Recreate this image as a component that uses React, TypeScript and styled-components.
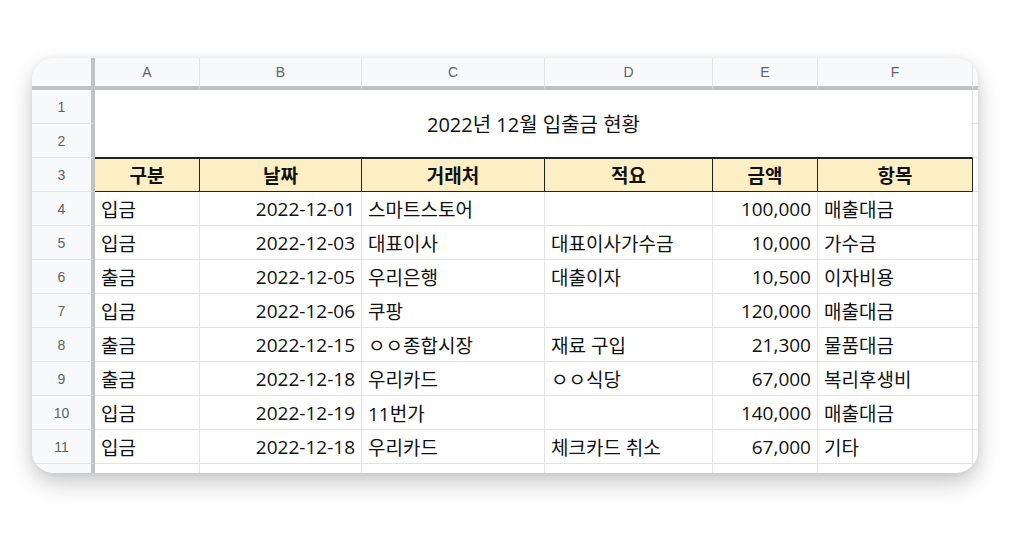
import React from "react";
import styled, { createGlobalStyle } from "styled-components";

const G = createGlobalStyle`
  body { margin: 0; background: #fff; font-family: "Open Sans", "Noto Sans CJK KR", sans-serif; }
`;

const Page = styled.div`
  width: 1024px; height: 535px; padding: 58px 46px 0 32px; box-sizing: border-box;
`;
const Card = styled.div`
  width: 946px; height: 415px; border-radius: 22px; overflow: hidden; background: #fff;
  box-shadow: 0 10px 22px rgba(0,0,0,0.22), 0 0 6px rgba(0,0,0,0.06);
`;
const Grid = styled.div`
  display: grid;
  grid-template-columns: 63px 105px 162px 183px 168px 105px 155px 20px;
  grid-template-rows: 32px repeat(11, 34px) 30px;
`;
const Cell = styled.div<{ $align?: string; $bold?: boolean; $hdr?: boolean }>`
  box-sizing: border-box; border-right: 1px solid #e2e3e3; border-bottom: 1px solid #e2e3e3;
  display: flex; align-items: center; justify-content: ${p => p.$align || "flex-start"};
  padding: 0 6px; font-size: 19px; color: #111; white-space: nowrap; overflow: visible;
  font-weight: ${p => (p.$bold ? 700 : 400)};
  ${p => p.$hdr ? "background:#fdefc4; border-right:1px solid #222; border-bottom:1px solid #222; border-top:1px solid #222;" : ""}
`;
const ColHead = styled.div<{ $corner?: boolean }>`
  box-sizing: border-box; background: #f8f9fa; color: #5f6368;
  font-family: "Liberation Sans", Arial, sans-serif; font-size: 14px;
  display: flex; align-items: center; justify-content: center;
  border-right: ${p => (p.$corner ? "4px solid #c0c2c4" : "1px solid #e2e3e3")};
  border-bottom: 4px solid #c0c2c4;
`;
const RowHead = styled.div`
  box-sizing: border-box; background: #f8f9fa; color: #5f6368;
  font-family: "Liberation Sans", Arial, sans-serif; font-size: 14px;
  display: flex; align-items: center; justify-content: center;
  border-right: 4px solid #c0c2c4; border-bottom: 1px solid #e2e3e3;
`;
const Title = styled.div`
  grid-column: 2 / 8; grid-row: 2 / 4; display: flex; align-items: center; justify-content: center;
  font-size: 20px; color: #111; border-right: 1px solid #e2e3e3; border-bottom: 1px solid #222;
`;
const Blank = styled.div`
  box-sizing: border-box; border-bottom: 1px solid #e2e3e3;
`;

const cols = ["A", "B", "C", "D", "E", "F"];
const headers = ["구분", "날짜", "거래처", "적요", "금액", "항목"];
const rows = [
  ["입금", "2022-12-01", "스마트스토어", "", "100,000", "매출대금"],
  ["입금", "2022-12-03", "대표이사", "대표이사가수금", "10,000", "가수금"],
  ["출금", "2022-12-05", "우리은행", "대출이자", "10,500", "이자비용"],
  ["입금", "2022-12-06", "쿠팡", "", "120,000", "매출대금"],
  ["출금", "2022-12-15", "ㅇㅇ종합시장", "재료 구입", "21,300", "물품대금"],
  ["출금", "2022-12-18", "우리카드", "ㅇㅇ식당", "67,000", "복리후생비"],
  ["입금", "2022-12-19", "11번가", "", "140,000", "매출대금"],
  ["입금", "2022-12-18", "우리카드", "체크카드 취소", "67,000", "기타"],
];

export default function App() {
  return (
    <Page>
      <G />
      <Card>
        <Grid>
          <ColHead $corner />
          {cols.map(c => <ColHead key={c}>{c}</ColHead>)}
          <ColHead />
          <RowHead>1</RowHead>
          <Title>2022년 12월 입출금 현황</Title>
          <Blank />
          <RowHead>2</RowHead>
          <Blank />
          <RowHead>3</RowHead>
          {headers.map(h => <Cell key={h} $hdr $bold $align="center">{h}</Cell>)}
          <Blank />
          {rows.map((r, i) => (
            <React.Fragment key={i}>
              <RowHead>{i + 4}</RowHead>
              {r.map((v, j) => (
                <Cell key={j} $align={j === 1 || j === 4 ? "flex-end" : "flex-start"}>{v}</Cell>
              ))}
              <Blank />
            </React.Fragment>
          ))}
          <RowHead />
          {cols.map(c => <Cell key={c} />)}
          <Blank />
        </Grid>
      </Card>
    </Page>
  );
}
